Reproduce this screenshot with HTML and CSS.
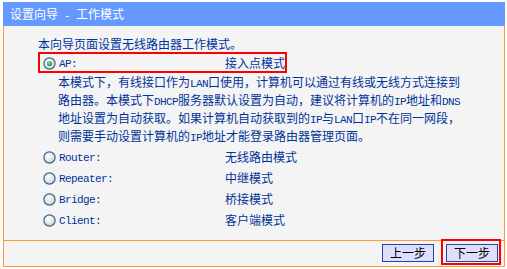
FILE: index.html
```html
<!DOCTYPE html>
<html lang="zh-CN">
<head>
<meta charset="utf-8">
<title>设置向导 - 工作模式</title>
<link rel="stylesheet" href="styles.css">
</head>
<body>
<div class="wizard">
  <div class="title">设置向导<span class="en"> - </span>工作模式</div>
  <div class="panel">
    <p class="intro">本向导页面设置无线路由器工作模式。</p>
    <div class="opt selected">
      <svg class="radio" width="13" height="13" viewBox="0 0 13 13">
        <defs>
          <radialGradient id="rf1" cx="40%" cy="35%" r="70%">
            <stop offset="0" stop-color="#ffffff"/>
            <stop offset="1" stop-color="#c9d2da"/>
          </radialGradient>
          <radialGradient id="dot" cx="40%" cy="35%" r="70%">
            <stop offset="0" stop-color="#8fe08f"/>
            <stop offset="1" stop-color="#1c8f2a"/>
          </radialGradient>
        </defs>
        <circle cx="6.5" cy="6.5" r="5.6" fill="url(#rf1)" stroke="#3a6388" stroke-width="1.2"/>
        <circle cx="6.5" cy="6.5" r="2.6" fill="url(#dot)"/>
      </svg>
      <span class="label en">AP:</span>
      <span class="name">接入点模式</span>
    </div>
    <p class="desc">本模式下，有线接口作为<span class="en">LAN</span>口使用，计算机可以通过有线或无线方式连接到<br>路由器。本模式下<span class="en">DHCP</span>服务器默认设置为自动，建议将计算机的<span class="en">IP</span>地址和<span class="en">DNS</span><br>地址设置为自动获取。如果计算机自动获取到的<span class="en">IP</span>与<span class="en">LAN</span>口<span class="en">IP</span>不在同一网段，<br>则需要手动设置计算机的<span class="en">IP</span>地址才能登录路由器管理页面。</p>
    <div class="opt">
      <svg class="radio" width="13" height="13" viewBox="0 0 13 13"><defs><radialGradient id="rf2" cx="40%" cy="35%" r="70%"><stop offset="0" stop-color="#ffffff"/><stop offset="1" stop-color="#c9d2da"/></radialGradient></defs><circle cx="6.5" cy="6.5" r="5.6" fill="url(#rf2)" stroke="#3a6388" stroke-width="1.2"/></svg>
      <span class="label en">Router:</span>
      <span class="name">无线路由模式</span>
    </div>
    <div class="opt">
      <svg class="radio" width="13" height="13" viewBox="0 0 13 13"><defs><radialGradient id="rf3" cx="40%" cy="35%" r="70%"><stop offset="0" stop-color="#ffffff"/><stop offset="1" stop-color="#c9d2da"/></radialGradient></defs><circle cx="6.5" cy="6.5" r="5.6" fill="url(#rf3)" stroke="#3a6388" stroke-width="1.2"/></svg>
      <span class="label en">Repeater:</span>
      <span class="name">中继模式</span>
    </div>
    <div class="opt">
      <svg class="radio" width="13" height="13" viewBox="0 0 13 13"><defs><radialGradient id="rf4" cx="40%" cy="35%" r="70%"><stop offset="0" stop-color="#ffffff"/><stop offset="1" stop-color="#c9d2da"/></radialGradient></defs><circle cx="6.5" cy="6.5" r="5.6" fill="url(#rf4)" stroke="#3a6388" stroke-width="1.2"/></svg>
      <span class="label en">Bridge:</span>
      <span class="name">桥接模式</span>
    </div>
    <div class="opt">
      <svg class="radio" width="13" height="13" viewBox="0 0 13 13"><defs><radialGradient id="rf5" cx="40%" cy="35%" r="70%"><stop offset="0" stop-color="#ffffff"/><stop offset="1" stop-color="#c9d2da"/></radialGradient></defs><circle cx="6.5" cy="6.5" r="5.6" fill="url(#rf5)" stroke="#3a6388" stroke-width="1.2"/></svg>
      <span class="label en">Client:</span>
      <span class="name">客户端模式</span>
    </div>
  </div>
  <div class="footer">
    <button class="btn" type="button">上一步</button>
    <span class="hl"><button class="btn" type="button">下一步</button></span>
  </div>
</div>
</body>
</html>
```
FILE: styles.css
```css
html, body {
  margin: 0;
  padding: 0;
  background: #ffffff;
}

body {
  font-family: "Noto Sans CJK SC", sans-serif;
  font-size: 12px;
  color: #003399;
}

.wizard {
  margin: 2px 0 0 3px;
  width: 502px;
}

.title {
  height: 24px;
  line-height: 24px;
  padding-left: 7px;
  background: #6699ff;
  color: #ffffff;
  font-size: 12px;
  overflow: hidden;
}

.en {
  font-family: "Liberation Mono", monospace;
  font-size: 11px;
  letter-spacing: -0.6px;
  line-height: 10px;
}

.panel {
  background: #f4f4f4;
  border-left: 1px solid #ff9933;
  border-right: 1px solid #ff9933;
  padding: 10px 0 10px 34px;
}

.intro {
  margin: 0;
  line-height: 16px;
  height: 16px;
}

.opt {
  display: grid;
  grid-template-columns: 13px 163px max-content;
  column-gap: 3px;
  align-items: center;
  height: 21px;
  box-sizing: border-box;
  border: 2px solid transparent;
  padding-left: 3px;
}

.opt .label {
  line-height: 17px;
  white-space: nowrap;
  padding-top: 2px;
}

.opt .name {
  line-height: 17px;
  white-space: nowrap;
  margin-top: -2px;
}

.opt.selected {
  width: 249px;
  border-color: #ff0000;
}

.radio {
  display: block;
}

.desc {
  margin: 0 0 1px 20px;
  line-height: 18px;
  height: 72px;
  white-space: nowrap;
}

.footer {
  display: flex;
  justify-content: flex-end;
  align-items: flex-start;
  height: 25px;
  background: #f4f4f4;
  border: 1px solid #ff9933;
  padding-right: 3px;
}

.btn {
  width: 52px;
  height: 18px;
  margin: 3px 7px 0 0;
  padding: 0;
  background: #dddfff;
  border: 1px solid #2642a8;
  color: #000000;
  font-family: "Noto Sans CJK SC", sans-serif;
  font-size: 12px;
  line-height: 16px;
}

.hl {
  display: block;
  margin-top: -2px;
  border: 2px solid #ff0000;
  padding: 3px 1px 1px 3px;
}

.hl .btn {
  margin: 0;
  display: block;
}
```
